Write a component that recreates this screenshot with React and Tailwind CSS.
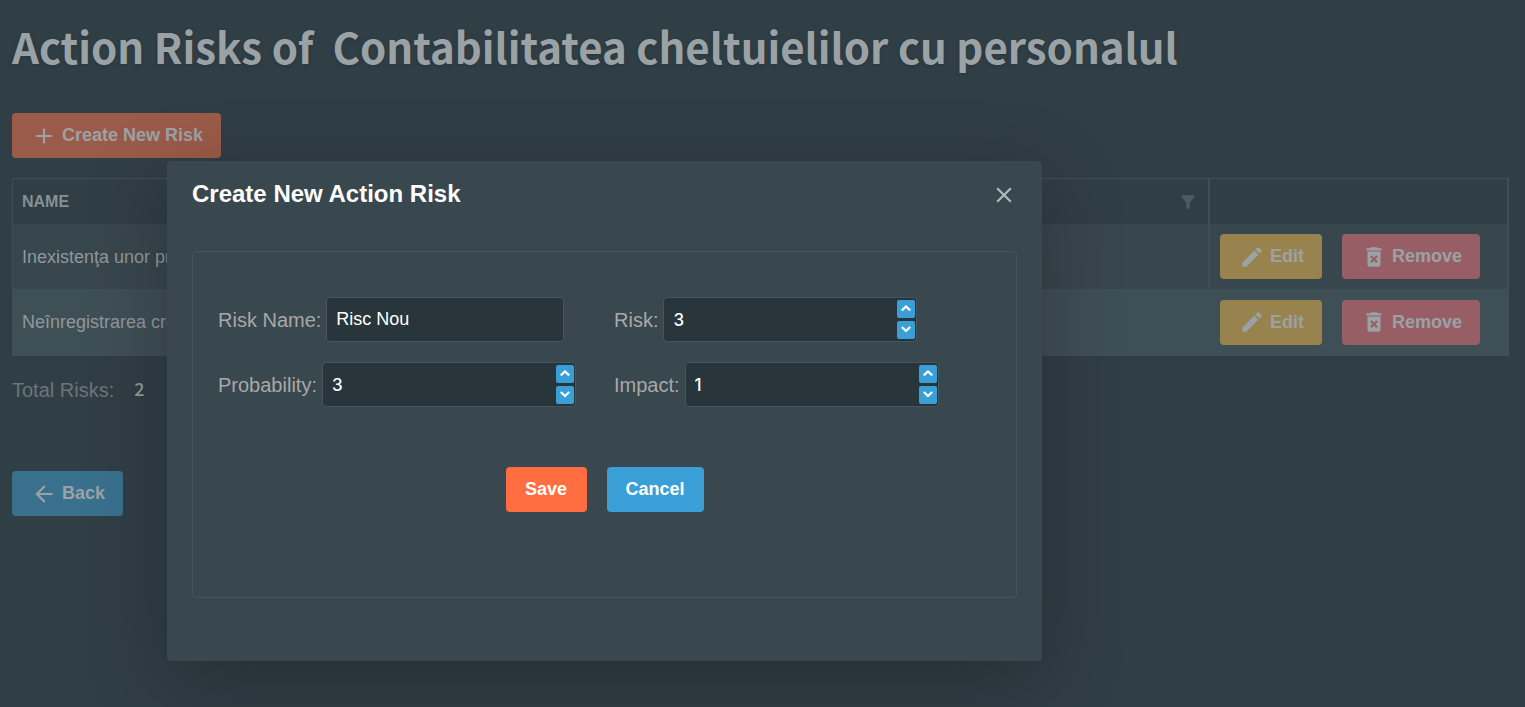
import React from "react";
import { MdAdd, MdArrowBack, MdClose, MdDeleteForever, MdEdit, MdFilterAlt } from "react-icons/md";

const risks = [
  { id: 1, name: "Inexistenţa unor pr", cell: "border-[#404f56] bg-[#38464d]" },
  { id: 2, name: "Neînregistrarea cro", cell: "border-[#3f4f56] bg-[#3f4f56]" },
];

function IconButton({ icon: Icon, color, children }) {
  return (
    <button
      type="button"
      className={`flex h-[45px] items-center gap-[5px] rounded-[4px] pr-[18px] pl-[19px] text-[18px] leading-6 font-bold text-[#9ba2a5] ${color}`}
    >
      <Icon className="size-[26px] shrink-0" aria-hidden="true" />
      <span className="pb-px">{children}</span>
    </button>
  );
}

function Field({ id, label, children }) {
  return (
    <div className="flex items-center gap-[5px]">
      <label htmlFor={id} className="text-[20px] leading-6 text-[#a8a8a8]">
        {label}
      </label>
      {children}
    </div>
  );
}

function Chevron({ d }) {
  return (
    <svg viewBox="0 0 18 18" className="size-[18px]" fill="none" stroke="currentColor" strokeWidth="2.2" aria-hidden="true">
      <path d={d} />
    </svg>
  );
}

const inputBox = "h-[45px] rounded-[4px] border border-[#46555d] bg-[#28363c] px-[9px] leading-6 text-white outline-none";

function NumberField({ id, label, value }) {
  const step = "flex h-[18px] w-[18px] items-center justify-center rounded-[2px] bg-[#3a9fd6] text-white";
  return (
    <Field id={id} label={label}>
      <div className="relative">
        <input
          id={id}
          type="text"
          inputMode="numeric"
          defaultValue={value}
          className={`w-[254px] font-['Inter',sans-serif] text-[17px] font-medium ${inputBox}`}
        />
        <div className="absolute inset-y-[3px] right-[2px] flex flex-col justify-center gap-[3px]">
          <button type="button" aria-label={`Increase ${label}`} className={step}>
            <Chevron d="M4.8 10.4 9 6.4l4.2 4" />
          </button>
          <button type="button" aria-label={`Decrease ${label}`} className={step}>
            <Chevron d="M4.8 6 9 10l4.2-4" />
          </button>
        </div>
      </div>
    </Field>
  );
}

export default function App() {
  return (
    <div className="relative min-h-screen overflow-hidden bg-[#303e45] font-['Liberation_Sans',sans-serif]">
      <main className="pr-4 pl-3">
        <h1 className="h-[113px] pt-[14px] font-['Noto_Sans_CJK_SC',sans-serif] text-[42px] leading-[64px] font-bold whitespace-pre text-[#9ba2a5] [text-shadow:0_1px_3px_#28353b]">
          {"Action Risks of  Contabilitatea cheltuielilor cu personalul"}
        </h1>

        <div className="flex">
          <IconButton icon={MdAdd} color="bg-[#9b5b49]">Create New Risk</IconButton>
        </div>

        <table className="mt-5 w-full table-fixed border-separate border-spacing-0 border border-[#404f56] text-left">
          <thead>
            <tr className="h-[45px]">
              <th className="w-[190px] px-[9px] text-[16px] leading-6 font-bold text-[#869095]">NAME</th>
              <th className="border-r-2 border-[#404f56] px-[10px]">
                <button type="button" aria-label="Filter" className="ml-auto flex text-[#4c5c64]">
                  <MdFilterAlt className="size-[20px]" />
                </button>
              </th>
              <th aria-label="Actions" className="w-[298px] border-r border-[#404f56]" />
            </tr>
          </thead>
          <tbody>
            {risks.map((risk) => (
              <tr key={risk.id} className="h-[65px] last:h-[66px]">
                <td className={`px-[9px] text-[18px] leading-6 whitespace-nowrap text-[#8f989c] ${risk.cell}`}>{risk.name}</td>
                <td className={`border-r-2 ${risk.cell}`} />
                <td className={`border-r px-[10px] ${risk.cell}`}>
                  <div className="flex gap-5">
                    <IconButton icon={MdEdit} color="bg-[#98834e]">Edit</IconButton>
                    <IconButton icon={MdDeleteForever} color="bg-[#985e66]">Remove</IconButton>
                  </div>
                </td>
              </tr>
            ))}
          </tbody>
        </table>

        <p className="mt-[22px] flex items-start gap-5 text-[20px] leading-6 text-[#6c7579]">
          <span>Total Risks:</span>
          <span className="font-['Noto_Sans_CJK_SC',sans-serif] text-[18px] leading-5 font-medium text-[#8f989c]">2</span>
        </p>

        <div className="mt-[69px] flex">
          <IconButton icon={MdArrowBack} color="bg-[#39708e]">Back</IconButton>
        </div>
      </main>

      <section
        role="dialog"
        aria-labelledby="dialog-title"
        className="absolute top-[161px] left-[167px] flex min-h-[500px] w-[875px] flex-col rounded-[4px] bg-[#39474e] px-[25px] pb-[63px] shadow-[0_20px_80px_rgba(0,0,0,0.25)]"
      >
        <header className="flex h-[90px] items-start justify-between pt-[21px]">
          <h2 id="dialog-title" className="text-[24px] leading-6 font-bold text-white">
            Create New Action Risk
          </h2>
          <button type="button" aria-label="Close" className="text-[#b4bbbe]">
            <MdClose className="size-[26px]" />
          </button>
        </header>

        <form className="flex-1 rounded-[4px] border border-[#46555d] px-[25px] pt-[45px]">
          <div className="grid grid-cols-[396px_1fr] gap-y-5">
            <Field id="risk-name" label="Risk Name:">
              <input id="risk-name" type="text" defaultValue="Risc Nou" className={`w-[238px] text-[18px] ${inputBox}`} />
            </Field>
            <NumberField id="risk" label="Risk:" value="3" />
            <NumberField id="probability" label="Probability:" value="3" />
            <NumberField id="impact" label="Impact:" value="1" />
          </div>
          <div className="mt-[60px] flex justify-center gap-5">
            <button type="button" className="h-[45px] w-[81px] rounded-[4px] bg-[#ff6d41] pb-px text-[18px] leading-6 font-bold text-white">
              Save
            </button>
            <button type="button" className="h-[45px] w-[97px] rounded-[4px] bg-[#3a9fd6] pb-px text-[18px] leading-6 font-bold text-white">
              Cancel
            </button>
          </div>
        </form>
      </section>
    </div>
  );
}
